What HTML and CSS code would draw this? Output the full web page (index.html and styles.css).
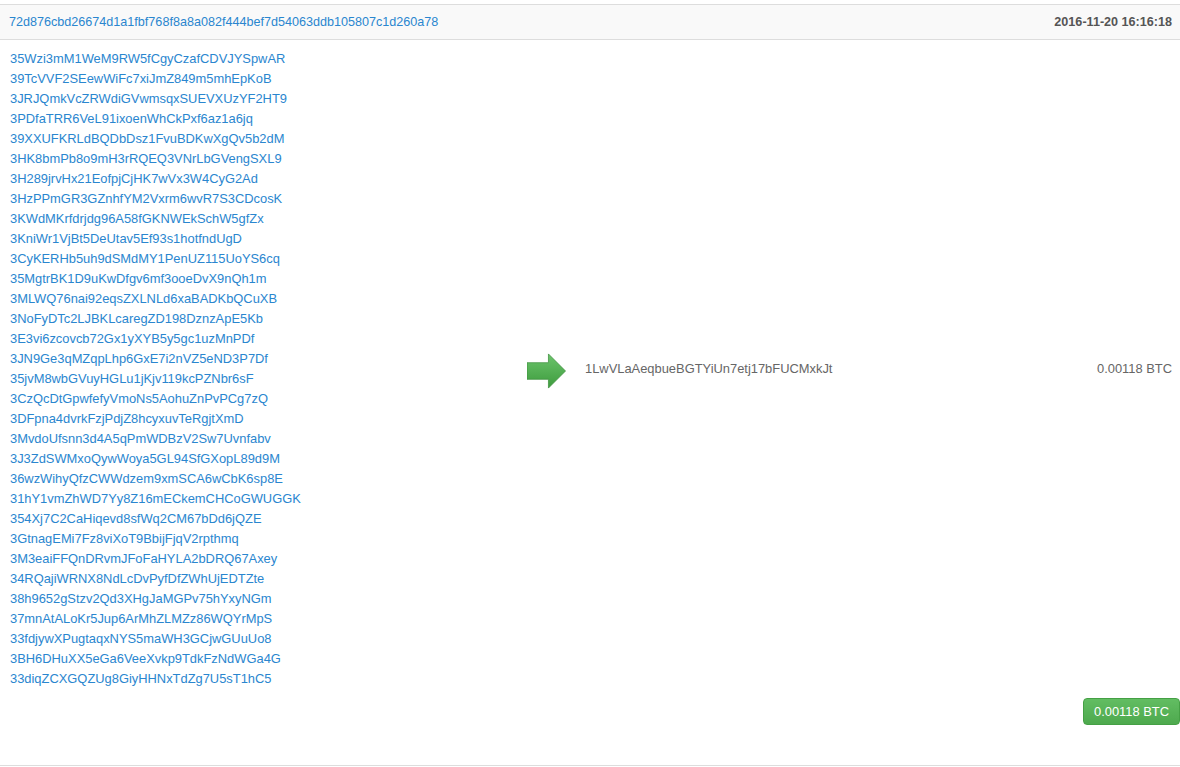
FILE: index.html
```html
<!DOCTYPE html>
<html lang="en">
<head>
    <meta charset="UTF-8">
    <meta name="viewport" content="width=device-width, initial-scale=1.0">
    <title>Transaction</title>
    <link rel="stylesheet" href="styles.css">
</head>
<body>

<div class="tx">
    <div class="tx-head">
        <a class="hash" href="#">72d876cbd26674d1a1fbf768f8a8a082f444bef7d54063ddb105807c1d260a78</a>
        <span class="time">2016-11-20 16:16:18</span>
    </div>

    <div class="tx-body">
        <div class="inputs">
            <a href="#">35Wzi3mM1WeM9RW5fCgyCzafCDVJYSpwAR</a>
            <a href="#">39TcVVF2SEewWiFc7xiJmZ849m5mhEpKoB</a>
            <a href="#">3JRJQmkVcZRWdiGVwmsqxSUEVXUzYF2HT9</a>
            <a href="#">3PDfaTRR6VeL91ixoenWhCkPxf6az1a6jq</a>
            <a href="#">39XXUFKRLdBQDbDsz1FvuBDKwXgQv5b2dM</a>
            <a href="#">3HK8bmPb8o9mH3rRQEQ3VNrLbGVengSXL9</a>
            <a href="#">3H289jrvHx21EofpjCjHK7wVx3W4CyG2Ad</a>
            <a href="#">3HzPPmGR3GZnhfYM2Vxrm6wvR7S3CDcosK</a>
            <a href="#">3KWdMKrfdrjdg96A58fGKNWEkSchW5gfZx</a>
            <a href="#">3KniWr1VjBt5DeUtav5Ef93s1hotfndUgD</a>
            <a href="#">3CyKERHb5uh9dSMdMY1PenUZ115UoYS6cq</a>
            <a href="#">35MgtrBK1D9uKwDfgv6mf3ooeDvX9nQh1m</a>
            <a href="#">3MLWQ76nai92eqsZXLNLd6xaBADKbQCuXB</a>
            <a href="#">3NoFyDTc2LJBKLcaregZD198DznzApE5Kb</a>
            <a href="#">3E3vi6zcovcb72Gx1yXYB5y5gc1uzMnPDf</a>
            <a href="#">3JN9Ge3qMZqpLhp6GxE7i2nVZ5eND3P7Df</a>
            <a href="#">35jvM8wbGVuyHGLu1jKjv119kcPZNbr6sF</a>
            <a href="#">3CzQcDtGpwfefyVmoNs5AohuZnPvPCg7zQ</a>
            <a href="#">3DFpna4dvrkFzjPdjZ8hcyxuvTeRgjtXmD</a>
            <a href="#">3MvdoUfsnn3d4A5qPmWDBzV2Sw7Uvnfabv</a>
            <a href="#">3J3ZdSWMxoQywWoya5GL94SfGXopL89d9M</a>
            <a href="#">36wzWihyQfzCWWdzem9xmSCA6wCbK6sp8E</a>
            <a href="#">31hY1vmZhWD7Yy8Z16mECkemCHCoGWUGGK</a>
            <a href="#">354Xj7C2CaHiqevd8sfWq2CM67bDd6jQZE</a>
            <a href="#">3GtnagEMi7Fz8viXoT9BbijFjqV2rpthmq</a>
            <a href="#">3M3eaiFFQnDRvmJFoFaHYLA2bDRQ67Axey</a>
            <a href="#">34RQajiWRNX8NdLcDvPyfDfZWhUjEDTZte</a>
            <a href="#">38h9652gStzv2Qd3XHgJaMGPv75hYxyNGm</a>
            <a href="#">37mnAtALoKr5Jup6ArMhZLMZz86WQYrMpS</a>
            <a href="#">33fdjywXPugtaqxNYS5maWH3GCjwGUuUo8</a>
            <a href="#">3BH6DHuXX5eGa6VeeXvkp9TdkFzNdWGa4G</a>
            <a href="#">33diqZCXGQZUg8GiyHHNxTdZg7U5sT1hC5</a>
        </div>

        <div class="arrow">
            <svg width="40" height="36" viewBox="0 0 40 36">
                <defs>
                    <linearGradient id="arrowFill" x1="0" y1="0" x2="0" y2="1">
                        <stop offset="0" stop-color="#6cc46c"/>
                        <stop offset="1" stop-color="#3d9b3d"/>
                    </linearGradient>
                </defs>
                <polygon points="0,9.5 22,9.5 22,0.5 39.5,18 22,35.5 22,26.5 0,26.5" fill="url(#arrowFill)" stroke="#3f923f" stroke-width="0.8"/>
            </svg>
        </div>

        <div class="outputs">
            <span class="out-addr">1LwVLaAeqbueBGTYiUn7etj17bFUCMxkJt</span>
            <span class="out-value">0.00118 BTC</span>
        </div>
    </div>

    <div class="tx-foot">
        <button class="btn-total">0.00118 BTC</button>
    </div>
</div>

</body>
</html>
```

FILE: styles.css
```css
body {
    margin: 0;
    padding-top: 4px;
    font-family: "Liberation Sans", Arial, sans-serif;
    font-size: 12.6px;
    line-height: 20px;
    color: #555;
    background-color: #fff;
}
a {
    color: #2a86cf;
    text-decoration: none;
}
.tx {
    border-top: 1px solid #ddd;
    border-bottom: 1px solid #ddd;
}
.tx-head {
    display: flex;
    justify-content: space-between;
    padding: 7px 8px 7px 9px;
    background-color: #f9f9f9;
    border-bottom: 1px solid #ddd;
}
.time {
    font-weight: bold;
    color: #555;
}
.tx-body {
    display: grid;
    grid-template-columns: 517px 39px 1fr;
    align-items: center;
    padding: 9px 8px 9px 10px;
    font-size: 12.9px;
}
.inputs {
    display: flex;
    flex-direction: column;
    align-items: flex-start;
}
.arrow {
    display: flex;
    align-items: center;
    padding-top: 3px;
}
.arrow svg {
    display: block;
}
.outputs {
    display: flex;
    justify-content: space-between;
    padding-left: 19px;
    color: #666;
}
.tx-foot {
    display: flex;
    justify-content: flex-end;
    padding-bottom: 40px;
}
.btn-total {
    font-family: "Liberation Sans", Arial, sans-serif;
    font-size: 12.9px;
    line-height: 17px;
    padding: 4px 10px;
    color: #fff;
    background: linear-gradient(#62bd62, #4ea94e);
    border: 1px solid #45a045;
    border-radius: 4px;
    cursor: pointer;
}
```
